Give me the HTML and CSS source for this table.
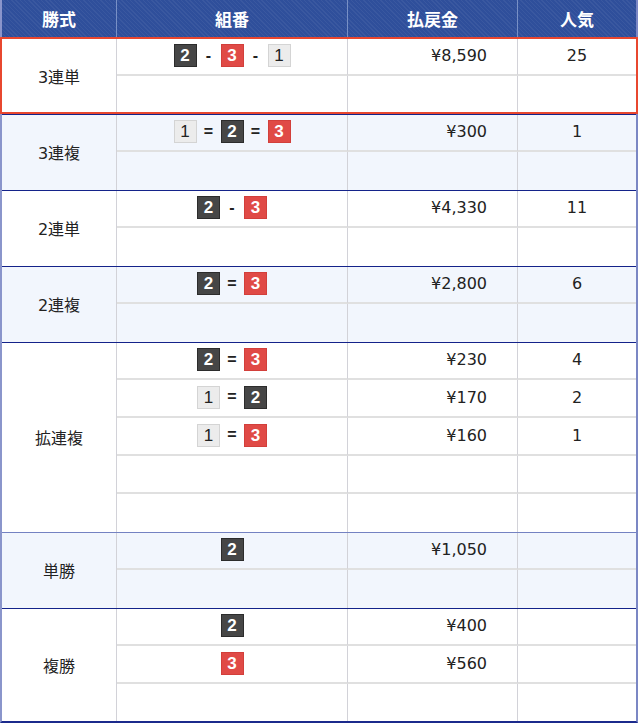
FILE: index.html
```html
<!DOCTYPE html>
<html lang="ja">
<head>
<meta charset="utf-8">
<title>払戻金</title>
<link rel="stylesheet" href="styles.css">
</head>
<body>
<div class="tbl">
  <div class="head">
    <div class="h">勝式</div>
    <div class="h">組番</div>
    <div class="h">払戻金</div>
    <div class="h">人気</div>
  </div>

  <div class="group r2 hl">
    <div class="lbl">3連単</div>
    <div class="c combo"><span class="n n2">2</span><span class="sep">-</span><span class="n n3">3</span><span class="sep">-</span><span class="n n1">1</span></div>
    <div class="c amt">¥8,590</div>
    <div class="c pop">25</div>
    <div class="c combo"></div><div class="c amt"></div><div class="c pop"></div>
  </div>

  <div class="group r2 alt">
    <div class="lbl">3連複</div>
    <div class="c combo"><span class="n n1">1</span><span class="sep">=</span><span class="n n2">2</span><span class="sep">=</span><span class="n n3">3</span></div>
    <div class="c amt">¥300</div>
    <div class="c pop">1</div>
    <div class="c combo"></div><div class="c amt"></div><div class="c pop"></div>
  </div>

  <div class="group r2">
    <div class="lbl">2連単</div>
    <div class="c combo"><span class="n n2">2</span><span class="sep">-</span><span class="n n3">3</span></div>
    <div class="c amt">¥4,330</div>
    <div class="c pop">11</div>
    <div class="c combo"></div><div class="c amt"></div><div class="c pop"></div>
  </div>

  <div class="group r2 alt">
    <div class="lbl">2連複</div>
    <div class="c combo"><span class="n n2">2</span><span class="sep">=</span><span class="n n3">3</span></div>
    <div class="c amt">¥2,800</div>
    <div class="c pop">6</div>
    <div class="c combo"></div><div class="c amt"></div><div class="c pop"></div>
  </div>

  <div class="group r5">
    <div class="lbl">拡連複</div>
    <div class="c combo"><span class="n n2">2</span><span class="sep">=</span><span class="n n3">3</span></div>
    <div class="c amt">¥230</div>
    <div class="c pop">4</div>
    <div class="c combo"><span class="n n1">1</span><span class="sep">=</span><span class="n n2">2</span></div>
    <div class="c amt">¥170</div>
    <div class="c pop">2</div>
    <div class="c combo"><span class="n n1">1</span><span class="sep">=</span><span class="n n3">3</span></div>
    <div class="c amt">¥160</div>
    <div class="c pop">1</div>
    <div class="c combo"></div><div class="c amt"></div><div class="c pop"></div>
    <div class="c combo"></div><div class="c amt"></div><div class="c pop"></div>
  </div>

  <div class="group r2 alt soft">
    <div class="lbl">単勝</div>
    <div class="c combo"><span class="n n2">2</span></div>
    <div class="c amt">¥1,050</div>
    <div class="c pop"></div>
    <div class="c combo"></div><div class="c amt"></div><div class="c pop"></div>
  </div>

  <div class="group r3 last">
    <div class="lbl">複勝</div>
    <div class="c combo"><span class="n n2">2</span></div>
    <div class="c amt">¥400</div>
    <div class="c pop"></div>
    <div class="c combo"><span class="n n3">3</span></div>
    <div class="c amt">¥560</div>
    <div class="c pop"></div>
    <div class="c combo"></div><div class="c amt"></div><div class="c pop"></div>
  </div>
</div>
</body>
</html>
```

FILE: styles.css
```css
* { box-sizing: border-box; }
html, body { margin: 0; padding: 0; background: #fff; }
body {
  font-family: "DejaVu Sans", "Noto Sans CJK JP", sans-serif;
  font-size: 16px;
  color: #222;
}
.tbl {
  width: 638px;
  border-left: 2px solid #8a95cb;
  border-right: 2px solid #7b87c4;
  border-bottom: 2px solid #1b2a8c;
}
.head {
  display: grid;
  grid-template-columns: 115px 231px 170px 118px;
  height: 38px;
  background-color: #2f4f9b;
  background-image: repeating-linear-gradient(45deg, rgba(255,255,255,0.05) 0 1px, transparent 1px 3px);
}
.h {
  display: flex;
  align-items: center;
  justify-content: center;
  color: #fff;
  font-family: "Noto Sans CJK JP", sans-serif;
  font-weight: bold;
  font-size: 17px;
  border-right: 1px solid #7890c6;
  padding-bottom: 1px;
}
.h:last-child { border-right: none; }

.group {
  position: relative;
  display: grid;
  grid-template-columns: 115px 231px 170px 118px;
  border-top: 1px solid #14238a;
  background: #fff;
}
.group.alt { background: #f2f6fd; }
.group.soft { border-top-color: #7482c2; }
.r2 { grid-template-rows: 37px 38px; }
.r3 { grid-template-rows: 37px 38px 37px; }
.r5 { grid-template-rows: 37px 38px 38px 38px 38px; }

.group.hl::after {
  content: "";
  position: absolute;
  top: -2px;
  left: -2px;
  right: -2px;
  bottom: 0;
  border: 2px solid #e8472f;
  z-index: 2;
  pointer-events: none;
}

.lbl {
  grid-column: 1;
  grid-row: 1 / -1;
  display: flex;
  align-items: center;
  justify-content: center;
  border-right: 1px solid #d2d2d8;
  padding-bottom: 1px;
}
.c {
  display: flex;
  align-items: center;
  border-bottom: 2px solid #e0e0e0;
  border-right: 1px solid #d2d2d8;
  padding-bottom: 2px;
}
.c.pop { border-right: none; justify-content: center; }
.c.amt { justify-content: flex-end; padding-right: 30px; }
.c.combo { justify-content: center; }
.c:nth-last-child(-n+3) { border-bottom: none; }

.n {
  display: inline-flex;
  align-items: center;
  justify-content: center;
  width: 23px;
  height: 23px;
  border: 1px solid;
  font-family: "Liberation Sans", Arial, sans-serif;
  font-weight: bold;
  font-size: 17px;
  line-height: 1;
}
.n1 { background: #ececec; border-color: #d4d4d4; color: #222; font-weight: normal; }
.n2 { background: #464646; border-color: #2c2c2c; color: #fff; }
.n3 { background: #e04a46; border-color: #d23f3b; color: #fff; }
.sep {
  width: 24px;
  text-align: center;
  font-family: "Liberation Sans", Arial, sans-serif;
  font-weight: bold;
  font-size: 16px;
  color: #222;
}
```
